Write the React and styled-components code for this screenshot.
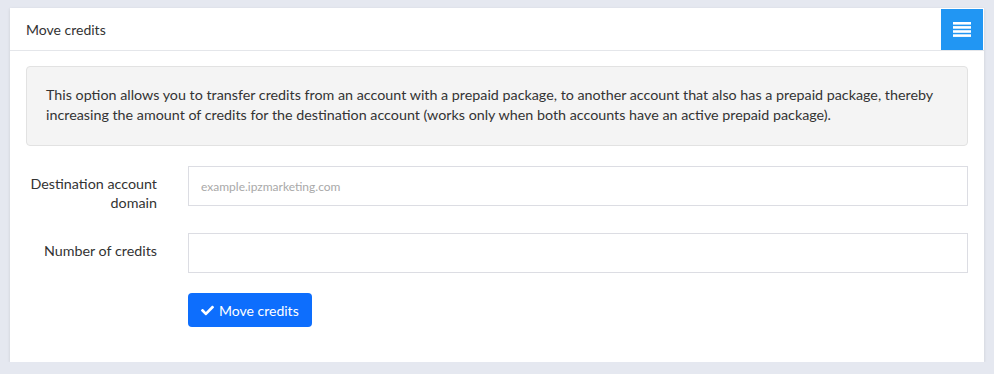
import React from 'react';
import styled, { createGlobalStyle } from 'styled-components';

const GlobalStyle = createGlobalStyle`
  body {
    margin: 0;
    background-color: #e5e8f0;
    font-family: Lato, "Noto Sans", sans-serif;
    color: #333;
  }
`;

const Page = styled.div`
  padding: 8px 10px 0;
`;

const Card = styled.div`
  background-color: #fff;
  box-shadow: 0 1px 3px rgba(0, 0, 0, 0.12);
`;

const CardHeader = styled.div`
  display: flex;
  align-items: center;
  justify-content: space-between;
  height: 43px;
  box-sizing: border-box;
  border-bottom: 1px solid #e4e6ea;
  padding-left: 16px;
`;

const Title = styled.h3`
  margin: 0;
  font-size: 14px;
  font-weight: 400;
  color: #333;
`;

const MenuButton = styled.button`
  align-self: flex-start;
  width: 42px;
  height: 41px;
  margin: 1px 1px 0 0;
  border: none;
  background-color: #2196f3;
  display: flex;
  align-items: center;
  justify-content: center;
  cursor: pointer;
  padding: 0;
`;

const CardBody = styled.div`
  padding: 15px 16px 35px;
`;

const InfoBox = styled.div`
  background-color: #f4f4f4;
  border: 1px solid #e2e2e2;
  border-radius: 4px;
  padding: 18px 19px 20px;
  font-size: 14.3px;
  line-height: 20px;
  color: #333;
  margin-bottom: 20px;
`;

const FormRow = styled.div`
  display: grid;
  grid-template-columns: 146px 1fr;
  column-gap: 16px;
  margin-bottom: ${(p) => p.$gap ?? 27}px;
`;

const Label = styled.label`
  box-sizing: border-box;
  height: 40px;
  text-align: right;
  padding: 8px 15px 0 0;
  font-size: 14.3px;
  line-height: 19px;
  color: #333;
`;

const Input = styled.input`
  box-sizing: border-box;
  height: 40px;
  width: 100%;
  border: 1px solid #dcdde3;
  border-radius: 0;
  padding: 0 12px;
  font-family: inherit;
  font-size: 12px;
  color: #333;
  outline: none;

  &::placeholder {
    color: #a9a9a9;
  }
`;

const SubmitButton = styled.button`
  grid-column: 2;
  justify-self: start;
  display: flex;
  align-items: center;
  gap: 5px;
  height: 34px;
  padding: 0 13px;
  border: none;
  border-radius: 4px;
  background-color: #0d6efd;
  color: #fff;
  font-family: inherit;
  font-size: 14px;
  cursor: pointer;
`;

const BarsIcon = () => (
  <svg width="18" height="15" viewBox="0 0 18 15">
    <rect x="0" y="0" width="18" height="2.6" fill="#fff" />
    <rect x="0" y="4.1" width="18" height="2.6" fill="#fff" />
    <rect x="0" y="8.2" width="18" height="2.6" fill="#fff" />
    <rect x="0" y="12.3" width="18" height="2.6" fill="#fff" />
  </svg>
);

const CheckIcon = () => (
  <svg width="13" height="13" viewBox="0 0 512 512">
    <path
      fill="#fff"
      d="M173.898 439.404l-166.4-166.4c-9.997-9.997-9.997-26.206 0-36.204l36.203-36.204c9.997-9.998 26.207-9.998 36.204 0L192 312.69 432.095 72.596c9.997-9.997 26.207-9.997 36.204 0l36.203 36.204c9.997 9.997 9.997 26.206 0 36.204l-294.4 294.401c-9.998 9.997-26.207 9.997-36.204-.001z"
    />
  </svg>
);

const App = () => {
  return (
    <Page>
      <GlobalStyle />
      <Card>
        <CardHeader>
          <Title>Move credits</Title>
          <MenuButton>
            <BarsIcon />
          </MenuButton>
        </CardHeader>
        <CardBody>
          <InfoBox>
            This option allows you to transfer credits from an account with a prepaid package, to another
            account that also has a prepaid package, thereby increasing the amount of credits for the
            destination account (works only when both accounts have an active prepaid package).
          </InfoBox>
          <FormRow>
            <Label>Destination account domain</Label>
            <Input type="text" placeholder="example.ipzmarketing.com" />
          </FormRow>
          <FormRow $gap={20}>
            <Label>Number of credits</Label>
            <Input type="text" />
          </FormRow>
          <FormRow $gap={0}>
            <SubmitButton>
              <CheckIcon />
              Move credits
            </SubmitButton>
          </FormRow>
        </CardBody>
      </Card>
    </Page>
  );
};

export default App;
